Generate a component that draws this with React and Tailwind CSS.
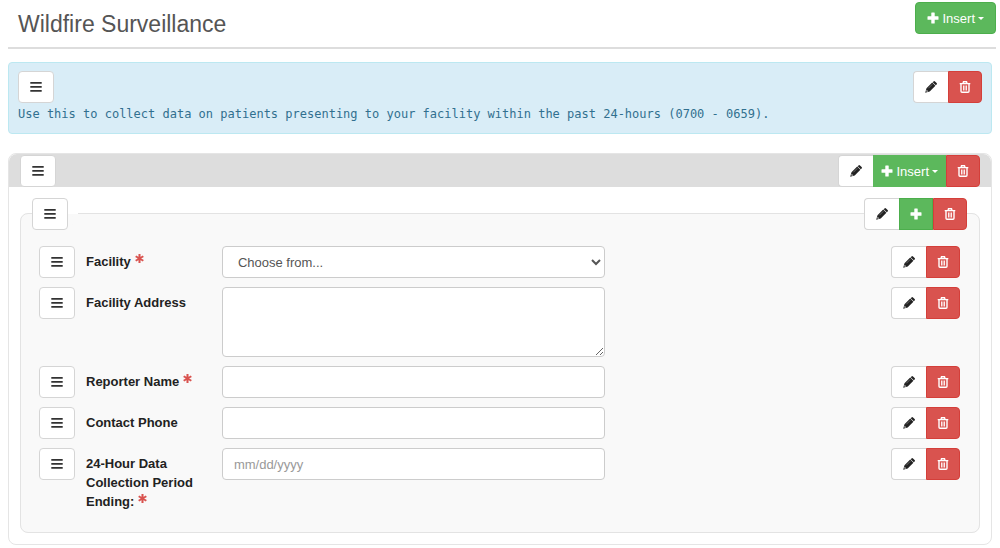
import React from 'react';

const HandleIcon = () => (
    <svg className="w-3 h-3" viewBox="0 0 12 12" fill="currentColor" aria-hidden="true">
        <path d="M.3 1h11.4v1.8H.3zM.3 5h11.4v1.8H.3zM.3 9h11.4v1.8H.3z" />
    </svg>
);

const PencilIcon = () => (
    <svg className="w-3 h-3" viewBox="0 0 12 12" aria-hidden="true">
        <path fill="currentColor" d="M8.5.4q.8-.7 1.5 0l1.6 1.6q.7.7 0 1.5l-.8.8L7.7 1.2zM7.2 1.6l3.2 3.2-5.7 5.7L.2 11.8l1.3-4.5z" />
        <path d="m3.3 7.3 4-4" stroke="#999" strokeWidth=".6" />
        <path fill="#fff" d="m1.8 8.9 1.3 1.3-1.2.5-.6-.6z" />
    </svg>
);

const TrashIcon = () => (
    <svg className="w-3 h-3" viewBox="0 0 12 12" fill="none" stroke="currentColor" aria-hidden="true">
        <path d="M.7 2.6h10.6M4 2.4l.5-1.6h3l.5 1.6M2 3v7.3q0 1 1 1h6q1 0 1-1V3" strokeWidth="1.4" />
        <path d="M4.5 4.5v5M6 4.5v5M7.5 4.5v5" strokeWidth=".9" />
    </svg>
);

const PlusIcon = () => (
    <svg className="w-3 h-3" viewBox="0 0 12 12" fill="currentColor" aria-hidden="true">
        <path d="M4.8.5h2.4q.5 0 .5.5v3.3H11q.5 0 .5.5v2.4q0 .5-.5.5H7.7V11q0 .5-.5.5H4.8q-.5 0-.5-.5V7.7H1q-.5 0-.5-.5V4.8q0-.5.5-.5h3.3V1q0-.5.5-.5z" />
    </svg>
);

const Required = () => (
    <svg className="inline-block w-[9px] h-[9px] ml-1 mb-2 text-[#d9534f]" viewBox="0 0 8 8" stroke="currentColor" strokeWidth="1.8" role="img" aria-label="required">
        <path d="M4 0v8M.6 2l6.8 4M7.4 2 .6 6" />
    </svg>
);

const Handle = () => (
    <button type="button" aria-label="Move" className="flex h-8 w-9 shrink-0 items-center justify-center rounded border border-[#d5d5d5] bg-white pb-px text-[#333]">
        <HandleIcon />
    </button>
);

const InsertLabel = () => (
    <>
        <PlusIcon />
        <span className="ml-[3px]">Insert</span>
        <span className="ml-[3px] border-x-3 border-t-3 border-x-transparent border-t-white" />
    </>
);

const Actions = ({ insert }) => (
    <div className="flex h-8 shrink-0">
        <button type="button" aria-label="Edit" className="flex w-[35px] items-center justify-center rounded-l border border-r-0 border-[#d5d5d5] bg-white pb-px text-[#222]">
            <PencilIcon />
        </button>
        {insert === 'menu' && (
            <button type="button" className="flex items-center border border-[#5cb85c] bg-[#5cb85c] px-[7px] text-[13px] text-white">
                <InsertLabel />
            </button>
        )}
        {insert === 'plus' && (
            <button type="button" aria-label="Insert" className="flex w-[34px] items-center justify-center border border-[#4cae4c] bg-[#5cb85c] pb-px text-white">
                <PlusIcon />
            </button>
        )}
        <button type="button" aria-label="Delete" className="flex w-[34px] items-center justify-center rounded-r border border-[#d43f3a] bg-[#d9534f] pb-px text-white">
            <TrashIcon />
        </button>
    </div>
);

const fields = [
    { id: 'facility', label: 'Facility', required: true, type: 'select' },
    { id: 'address', label: 'Facility Address', type: 'textarea' },
    { id: 'reporter', label: 'Reporter Name', required: true, type: 'text' },
    { id: 'phone', label: 'Contact Phone', type: 'tel' },
    { id: 'period', label: '24-Hour Data Collection Period Ending:', required: true, type: 'text', placeholder: 'mm/dd/yyyy' },
];

const Control = ({ field }) => {
    if (field.type === 'select') {
        return (
            <select id={field.id} className="block h-8 w-full rounded border border-[#ccc] bg-white pl-[11px] text-[#555]">
                <option>Choose from...</option>
            </select>
        );
    }
    if (field.type === 'textarea') {
        return <textarea id={field.id} className="block h-[70px] w-full rounded border border-[#ccc] bg-white px-[11px] py-1.5 text-[#555]" />;
    }
    return (
        <input
            id={field.id}
            type={field.type}
            placeholder={field.placeholder}
            className="block h-8 w-full rounded border border-[#ccc] bg-white px-[11px] text-[#555] placeholder:text-[#999]"
        />
    );
};

const FieldRow = ({ field }) => (
    <div className="flex items-start">
        <Handle />
        <div className="grid flex-1 grid-cols-[18fr_47fr_35fr]">
            <label htmlFor={field.id} className="pt-1.5 pl-[11px] pr-4 font-bold text-[#222]">
                {field.label}
                {field.required && <Required />}
            </label>
            <Control field={field} />
        </div>
        <Actions />
    </div>
);

const App = () => (
    <main className="bg-white pl-2 pr-2 text-[13px] leading-[19px] font-['Liberation_Sans',Arial,sans-serif]">
        <header className="-mr-1 flex h-[49px] items-start justify-between border-b-2 border-[#ddd] pl-2.5">
            <h1 className="pt-2.5 text-[23px] leading-7 text-[#555]">Wildfire Surveillance</h1>
            <button type="button" className="mt-0.5 flex h-8 items-center rounded border border-[#4cae4c] bg-[#5cb85c] px-[11px] text-[13px] text-white">
                <InsertLabel />
            </button>
        </header>

        <section className="mt-[13px] rounded border border-[#bce8f1] bg-[#d9edf7] px-[9px] pt-2 pb-2.5">
            <div className="flex justify-between">
                <Handle />
                <Actions />
            </div>
            <p className="mt-0.5 font-['DejaVu_Sans_Mono',monospace] text-xs leading-[18px] text-[#31708f]">
                Use this to collect data on patients presenting to your facility within the past 24-hours (0700 - 0659).
            </p>
        </section>

        <section className="mt-[19px] rounded-lg border border-[#e5e5e5] bg-white">
            <div className="flex justify-between rounded-t-lg bg-[#ddd] pt-px pl-[11px] pr-[11px]">
                <Handle />
                <Actions insert="menu" />
            </div>
            <fieldset className="mx-[11px] mt-[26px] mb-[11px] rounded-lg border border-[#e3e3e3] bg-[#f9f9f9] pl-[18px] pr-[19px] pb-[21px]">
                <div className="-mt-4 mb-4 -mx-[7px] flex justify-between">
                    <div className="-mr-2.5 bg-linear-to-b from-white from-50% to-[#f9f9f9] to-50% pr-2.5">
                        <Handle />
                    </div>
                    <Actions insert="plus" />
                </div>
                <div className="flex flex-col gap-[9px]">
                    {fields.map((field) => (
                        <FieldRow key={field.id} field={field} />
                    ))}
                </div>
            </fieldset>
        </section>
    </main>
);

export default App;
